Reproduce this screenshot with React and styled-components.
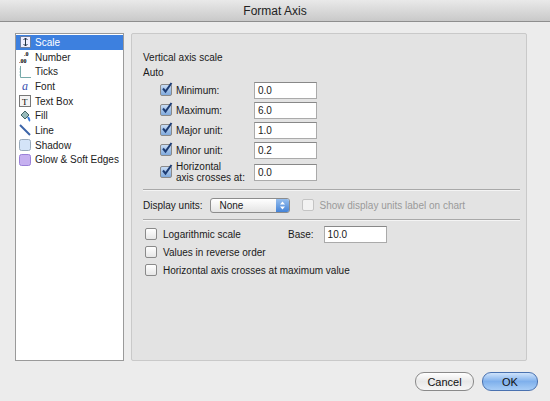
import React from 'react';
import styled, { createGlobalStyle } from 'styled-components';

const Global = createGlobalStyle`
  html, body { margin: 0; padding: 0; background: #ececec; }
  body { font-family: "Liberation Sans", Arial, sans-serif; font-size: 11px; color: #1a1a1a; }
`;

const Window = styled.div`
  width: 550px;
  height: 401px;
  display: flex;
  flex-direction: column;
  background: #ececec;
`;

const TitleBar = styled.div`
  height: 21px;
  display: flex;
  align-items: center;
  justify-content: center;
  background: linear-gradient(#e9e9e9, #c9c9c9);
  border-bottom: 1px solid #8e8e8e;
  font-size: 12px;
  color: #222;
`;

const Body = styled.div`
  display: flex;
  gap: 7px;
  padding: 11px 23px 0 15px;
  height: 328px;
`;

const Sidebar = styled.div`
  width: 107px;
  background: #fff;
  border: 1px solid #9a9a9a;
  padding-top: 1px;
`;

const NavItem = styled.div`
  display: flex;
  align-items: center;
  gap: 4px;
  height: 14.7px;
  padding-left: 3px;
  font-size: 10px;
  color: ${p => (p.$active ? '#fff' : '#222')};
  background: ${p => (p.$active ? '#3d80df' : 'transparent')};
`;

const Ico = styled.span`
  width: 12px;
  height: 12px;
  display: inline-flex;
  align-items: center;
  justify-content: center;
  flex: none;
  overflow: hidden;
`;

const Panel = styled.div`
  flex: 1;
  background: #e3e3e3;
  border: 1px solid #c9c9c9;
  border-radius: 2px;
  padding: 16px 3px 0 11px;
  font-size: 10px;
`;

const Heading = styled.div`
  height: 15px;
  line-height: 15px;
`;

const ScaleRow = styled.div`
  display: flex;
  align-items: center;
  height: ${p => (p.$tall ? 24 : 20)}px;
  padding-left: 17px;
`;

const Label = styled.div`
  width: 78px;
  margin-left: 4px;
  line-height: 11px;
`;

const Field = styled.div`
  width: 58px;
  height: 15px;
  background: #fff;
  border: 1px solid #aaa;
  border-top-color: #888;
  font-size: 10px;
  line-height: 15px;
  padding-left: 3px;
  margin-left: ${p => p.$ml || 0}px;
`;

const Check = styled.span`
  width: 10px;
  height: 10px;
  flex: none;
  border: 1px solid ${p => (p.$disabled ? '#c4c4c4' : '#8a8a8a')};
  border-radius: 2px;
  background: ${p => (p.$on ? 'linear-gradient(#c8dcf4, #7fa9dc)' : p.$disabled ? '#f2f2f2' : 'linear-gradient(#fff, #e6e6e6)')};
  position: relative;
`;

const Tick = styled.svg`
  position: absolute;
  left: 0;
  top: -3px;
`;

const Divider = styled.div`
  height: 1px;
  background: #a9a9a9;
  border-bottom: 1px solid #f4f4f4;
  margin: ${p => p.$m};
`;

const Row = styled.div`
  display: flex;
  align-items: center;
  gap: ${p => p.$gap || 6}px;
  height: ${p => p.$h || 18}px;
  padding-left: ${p => p.$pl || 0}px;
`;

const RowLabel = styled.span`
  width: ${p => p.$w}px;
`;

const Select = styled.div`
  width: 80px;
  height: 15px;
  border: 1px solid #8c8c8c;
  border-radius: 3px;
  background: linear-gradient(#fff, #e4e4e4);
  display: flex;
  align-items: center;
  justify-content: space-between;
  padding-left: 8px;
  box-sizing: border-box;
  overflow: hidden;
  margin-left: 8px;
`;

const Stepper = styled.div`
  width: 13px;
  height: 15px;
  background: linear-gradient(#9cc3f0, #3f7fd6);
  display: flex;
  align-items: center;
  justify-content: center;
`;

const Muted = styled.span`
  color: #9a9a9a;
`;

const Footer = styled.div`
  display: flex;
  justify-content: flex-end;
  gap: 8px;
  padding: 11px 12px 0 0;
`;

const Button = styled.div`
  width: ${p => p.$w}px;
  height: 17px;
  border-radius: 9px;
  border: 1px solid ${p => (p.$primary ? '#4a72b0' : '#8a8a8a')};
  background: ${p => (p.$primary ? 'linear-gradient(#cfe3fb, #7fb0ec 50%, #a8cdf6)' : 'linear-gradient(#fff, #e8e8e8 50%, #f6f6f6)')};
  display: flex;
  align-items: center;
  justify-content: center;
  font-size: 11px;
  color: #111;
`;

const CheckBox = ({ on, disabled }) => (
  <Check $on={on} $disabled={disabled}>
    {on && (
      <Tick width="12" height="12" viewBox="0 0 12 12">
        <path d="M2 6.5 L4.5 9.5 L10.5 1" stroke="#1d3c73" strokeWidth="2" fill="none" />
      </Tick>
    )}
  </Check>
);

const icons = {
  Scale: (
    <svg width="11" height="12"><rect x="0.5" y="0.5" width="10" height="11" fill="#eef" stroke="#6b7fa3" /><path d="M5.5 2v8M3.5 4l2-2 2 2M3.5 8l2 2 2-2" stroke="#234" fill="none" /></svg>
  ),
  Number: (
    <svg width="12" height="12"><text x="5" y="5" fontSize="6" fontWeight="700" fontFamily="Liberation Serif">.0</text><text x="0" y="11.5" fontSize="6" fontWeight="700" fontFamily="Liberation Serif">.00</text></svg>
  ),
  Ticks: <svg width="12" height="12"><path d="M1.5 0v11.5H12" stroke="#7aa" fill="none" /><path d="M1.5 3h-1M1.5 6h-1M1.5 9h-1" stroke="#7aa" /></svg>,
  Font: <span style={{ fontFamily: 'Liberation Serif', fontStyle: 'italic', color: '#3a4fb0', fontSize: 12 }}>a</span>,
  'Text Box': <svg width="12" height="12"><rect x="0.5" y="0.5" width="11" height="11" fill="#f4f4f4" stroke="#777" /><text x="3" y="9.5" fontSize="9" fontFamily="Liberation Serif">T</text></svg>,
  Fill: <svg width="12" height="12"><path d="M2 5l4-4 4 4-4 4z" fill="#9bb" stroke="#466" /><path d="M9 7c1 2 2 3 1 4" stroke="#3a7bd5" strokeWidth="2" fill="none" /></svg>,
  Line: <svg width="12" height="12"><path d="M1 1l10 10" stroke="#3c64a8" strokeWidth="2" /></svg>,
  Shadow: <svg width="12" height="12"><rect x="0.5" y="0.5" width="11" height="11" rx="2" fill="#d4e4f8" stroke="#9ab" /></svg>,
  'Glow & Soft Edges': <svg width="12" height="12"><rect x="0.5" y="0.5" width="11" height="11" rx="2" fill="#c6b0f0" stroke="#9a80d8" /></svg>,
};

const scaleRows = [
  ['Minimum:', '0.0'],
  ['Maximum:', '6.0'],
  ['Major unit:', '1.0'],
  ['Minor unit:', '0.2'],
];

export default function App() {
  return (
    <Window>
      <Global />
      <TitleBar>Format Axis</TitleBar>
      <Body>
        <Sidebar>
          {Object.keys(icons).map((k, i) => (
            <NavItem key={k} $active={i === 0}>
              <Ico>{icons[k]}</Ico>
              {k}
            </NavItem>
          ))}
        </Sidebar>
        <Panel>
          <Heading>Vertical axis scale</Heading>
          <Heading>Auto</Heading>
          {scaleRows.map(([l, v]) => (
            <ScaleRow key={l}>
              <CheckBox on />
              <Label>{l}</Label>
              <Field>{v}</Field>
            </ScaleRow>
          ))}
          <ScaleRow $tall>
            <CheckBox on />
            <Label>Horizontal<br />axis crosses at:</Label>
            <Field>0.0</Field>
          </ScaleRow>
          <Divider $m="5px 3px 6px 0" />
          <Row $h="16" $gap="0">
            Display units:
            <Select>
              None
              <Stepper>
                <svg width="5" height="9"><path d="M0 3.5L2.5 0.5 5 3.5zM0 5.5L2.5 8.5 5 5.5z" fill="#fff" /></svg>
              </Stepper>
            </Select>
            <Row $gap="5" $pl="12">
              <CheckBox disabled />
              <Muted>Show display units label on chart</Muted>
            </Row>
          </Row>
          <Divider $m="6px 3px 4px 0" />
          <Row $pl="2">
            <CheckBox />
            <RowLabel $w={119}>Logarithmic scale</RowLabel>
            Base:
            <Field $ml={4}>10.0</Field>
          </Row>
          <Row $pl="2">
            <CheckBox />
            Values in reverse order
          </Row>
          <Row $pl="2">
            <CheckBox />
            Horizontal axis crosses at maximum value
          </Row>
        </Panel>
      </Body>
      <Footer>
        <Button $w={57}>Cancel</Button>
        <Button $w={54} $primary>OK</Button>
      </Footer>
    </Window>
  );
}
